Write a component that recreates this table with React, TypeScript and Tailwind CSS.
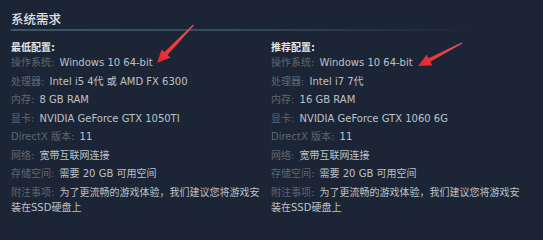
import React from "react";

type Row = { label: string; value: string };

const minRows: Row[] = [
  { label: "操作系统", value: "Windows 10 64-bit" },
  { label: "处理器", value: "Intel i5 4代 或 AMD FX 6300" },
  { label: "内存", value: "8 GB RAM" },
  { label: "显卡", value: "NVIDIA GeForce GTX 1050TI" },
  { label: "DirectX 版本", value: "11" },
  { label: "网络", value: "宽带互联网连接" },
  { label: "存储空间", value: "需要 20 GB 可用空间" },
  { label: "附注事项", value: "为了更流畅的游戏体验，我们建议您将游戏安装在SSD硬盘上" },
];

const recRows: Row[] = [
  { label: "操作系统", value: "Windows 10 64-bit" },
  { label: "处理器", value: "Intel i7 7代" },
  { label: "内存", value: "16 GB RAM" },
  { label: "显卡", value: "NVIDIA GeForce GTX 1060 6G" },
  { label: "DirectX 版本", value: "11" },
  { label: "网络", value: "宽带互联网连接" },
  { label: "存储空间", value: "需要 20 GB 可用空间" },
  { label: "附注事项", value: "为了更流畅的游戏体验，我们建议您将游戏安装在SSD硬盘上" },
];

function Column({ title, rows }: { title: string; rows: Row[] }) {
  return (
    <div className="w-[255px] flex flex-col">
      <div className="leading-[14px] font-bold text-[#e4e7ea]">{title}</div>
      <div className="flex flex-col gap-[3.5px]">
        {rows.map((r) => (
          <div key={r.label} className="leading-[15px]">
            <span className="text-[#5d6772] mr-[2px]">{r.label}: </span>
            <span className="text-[#bcc2c8]">{r.value}</span>
          </div>
        ))}
      </div>
    </div>
  );
}

export default function App() {
  return (
    <div
      className="relative w-[543px] h-[240px] overflow-hidden bg-[#1c2535] pt-[10px] pl-[11px] text-[10px]"
      style={{ fontFamily: '"DejaVu Sans", "Noto Sans CJK SC", sans-serif' }}
    >
      <div
        className="text-[12.5px] leading-[18px] font-medium text-[#dce3e9]"
        style={{ fontFamily: '"Noto Sans CJK SC", sans-serif' }}
      >
        系统需求
      </div>
      <div className="mt-px h-[2px] w-[462px] bg-gradient-to-r from-[#3f566a] via-[#34495c] to-transparent" />
      <div className="mt-[10px] flex gap-[5px]">
        <Column title="最低配置:" rows={minRows} />
        <Column title="推荐配置:" rows={recRows} />
      </div>
      <svg className="absolute left-0 top-0 pointer-events-none" width="543" height="240" viewBox="0 0 543 240">
        <defs>
          <linearGradient id="ar1" x1="193" y1="25" x2="157" y2="63" gradientUnits="userSpaceOnUse">
            <stop offset="0" stopColor="#f0545a" />
            <stop offset="1" stopColor="#e2262c" />
          </linearGradient>
          <linearGradient id="ar2" x1="462" y1="43" x2="418" y2="66" gradientUnits="userSpaceOnUse">
            <stop offset="0" stopColor="#f0545a" />
            <stop offset="1" stopColor="#e2262c" />
          </linearGradient>
        </defs>
        <polygon
          points="157,63 161.6,49.4 164.4,51.9 193.2,24.6 193.8,25.4 167.6,55.1 170.4,57.6"
          fill="url(#ar1)"
        />
        <polygon
          points="418,66 426.7,54.7 428.6,58.2 461.7,42.5 462.3,43.5 430.4,61.8 432.3,65.3"
          fill="url(#ar2)"
        />
      </svg>
    </div>
  );
}
